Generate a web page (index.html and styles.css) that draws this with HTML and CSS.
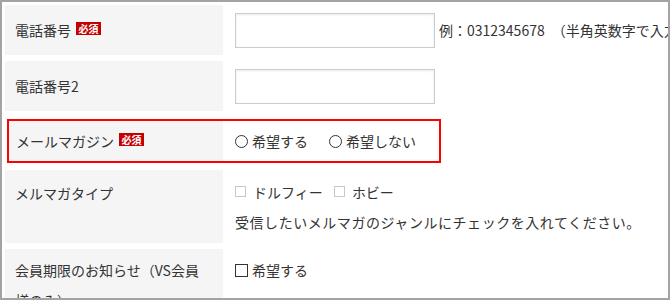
FILE: index.html
```html
<!DOCTYPE html>
<html lang="ja">
<head>
  <meta charset="UTF-8">
  <title>会員登録フォーム</title>
  <link rel="stylesheet" href="styles.css">
</head>
<body>
  <div class="frame">
    <div class="form">
      <div class="row row-tel">
        <div class="label">電話番号<span class="badge">必須</span></div>
        <div class="field">
          <input class="text-input" type="text">
          <span class="hint">例：0312345678 <span class="hint-note">（半角英数字で入力してください）</span></span>
        </div>
      </div>
      <div class="row row-tel">
        <div class="label">電話番号2</div>
        <div class="field">
          <input class="text-input" type="text">
        </div>
      </div>
      <div class="row row-mail">
        <div class="label">メールマガジン<span class="badge">必須</span></div>
        <div class="field">
          <label class="choice"><span class="radio"></span>希望する</label>
          <label class="choice choice-wide"><span class="radio"></span>希望しない</label>
        </div>
      </div>
      <div class="row row-type">
        <div class="label">メルマガタイプ</div>
        <div class="field field-stack">
          <div class="line">
            <label class="choice"><span class="check check-light"></span>ドルフィー</label>
            <label class="choice choice-tight"><span class="check check-light"></span>ホビー</label>
          </div>
          <div class="line note">受信したいメルマガのジャンルにチェックを入れてください。</div>
        </div>
      </div>
      <div class="row row-notice">
        <div class="label">会員期限のお知らせ（VS会員様のみ）</div>
        <div class="field field-stack">
          <div class="line">
            <label class="choice"><span class="check"></span>希望する</label>
          </div>
        </div>
      </div>
    </div>
  </div>
</body>
</html>
```

FILE: styles.css
```css
/* Base */
* {
  margin: 0;
  padding: 0;
  box-sizing: border-box;
}
body {
  font-family: "Noto Sans CJK JP", "Noto Sans", sans-serif;
  font-size: 14px;
  color: #333;
  background: #ffffff;
}
.frame {
  width: 670px;
  height: 300px;
  border: 2px solid #a3a3a3;
  padding: 3px 0 0 3px;
  overflow: hidden;
}
.form {
  display: flex;
  flex-direction: column;
  gap: 6px;
}
.row {
  display: flex;
}
.label {
  width: 218px;
  flex-shrink: 0;
  background: #f5f5f5;
  padding: 0 10px;
  line-height: 28px;
}
.field {
  padding-left: 12px;
  display: flex;
  align-items: center;
  white-space: nowrap;
}
.badge {
  display: inline-block;
  vertical-align: middle;
  margin: -3px 0 0 5px;
  width: 25px;
  height: 13px;
  line-height: 13px;
  background: #c40000;
  color: #ffffff;
  font-size: 10px;
  font-weight: bold;
  text-align: center;
}

/* Phone rows */
.row-tel {
  height: 50px;
}
.row-tel .label {
  display: flex;
  align-items: center;
}
.row-tel .field {
  align-items: flex-start;
  padding-top: 8px;
}
.text-input {
  width: 200px;
  height: 35px;
  border: 1px solid #cccccc;
  box-shadow: inset 0 1px 3px rgba(0, 0, 0, 0.08);
  background: #ffffff;
}
.hint {
  margin-left: 4px;
  line-height: 35px;
}
.hint-note {
  margin-left: 4px;
}

/* Mail magazine row (highlighted) */
.row-mail {
  width: 434px;
  margin: 2px 0 1px 2px;
  border: 2px solid #ff0000;
  height: 44px;
}
.row-mail .label {
  width: 214px;
  padding-left: 7px;
  display: flex;
  align-items: center;
}
.choice {
  display: inline-flex;
  align-items: center;
  gap: 4px;
}
.choice-wide {
  margin-left: 21px;
}
.choice-tight {
  margin-left: 8px;
}
.radio {
  width: 13px;
  height: 13px;
  border: 1px solid #333;
  border-radius: 50%;
}
.check {
  width: 13px;
  height: 13px;
  border: 1px solid #333;
}
.check-light {
  width: 11px;
  height: 11px;
  border-color: #c8c8c8;
  margin-right: 3px;
}

/* Stacked rows */
.field-stack {
  flex-direction: column;
  align-items: flex-start;
}
.line {
  line-height: 30px;
}
.note {
  letter-spacing: 0.55px;
}
.row-type {
  height: 73px;
}
.row-type .label {
  padding-top: 9px;
}
.row-type .field {
  padding-top: 6px;
}
.row-notice .label {
  padding: 6px 16px 0 10px;
  line-height: 30px;
}
.row-notice .field {
  padding-top: 6px;
}
```
